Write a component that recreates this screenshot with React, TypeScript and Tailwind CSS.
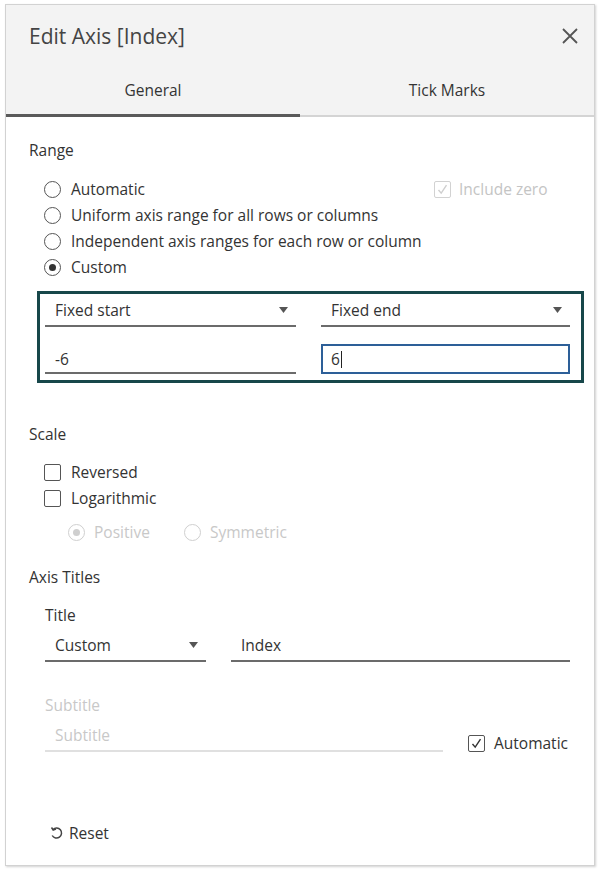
import React from 'react'

const Caret = () => (
  <svg width="9" height="6" viewBox="0 0 9 6" className="shrink-0">
    <path d="M0 0 L9 0 L4.5 6 Z" fill="#555" />
  </svg>
)

const Radio = ({ checked, disabled }: { checked?: boolean; disabled?: boolean }) => (
  <span
    className={`flex h-[17px] w-[17px] shrink-0 items-center justify-center rounded-full border-[1.5px] ${
      disabled ? 'border-[#cfcfcf]' : 'border-[#555]'
    }`}
  >
    {checked && (
      <span className={`h-[7px] w-[7px] rounded-full ${disabled ? 'bg-[#cfcfcf]' : 'bg-[#333]'}`} />
    )}
  </span>
)

const Checkbox = ({ checked, disabled }: { checked?: boolean; disabled?: boolean }) => (
  <span
    className={`flex h-[17px] w-[17px] shrink-0 items-center justify-center rounded-[2px] border-[1.5px] ${
      disabled ? 'border-[#d2d2d2]' : 'border-[#555]'
    }`}
  >
    {checked && (
      <svg width="11" height="11" viewBox="0 0 11 11">
        <path
          d="M1.5 6 L4.2 9.2 L9.5 1.2"
          fill="none"
          stroke={disabled ? '#cfcfcf' : '#333'}
          strokeWidth="1.4"
        />
      </svg>
    )}
  </span>
)

const Select = ({ label, width }: { label: string; width: string }) => (
  <div className={`flex h-[33px] ${width} items-center justify-between border-b-2 border-[#6b6b6b] pl-[10px] pr-[8px] pt-[1px]`}>
    <span>{label}</span>
    <Caret />
  </div>
)

export default function App() {
  return (
    <div
      className="h-[871px] w-[600px] overflow-hidden bg-white pl-[5px] pt-[4px] text-[15.5px] leading-[20px] text-[#333]"
      style={{ fontFamily: '"Open Sans", Arial, sans-serif' }}
    >
      <div className="flex h-[862px] w-[590px] flex-col border border-[#d2d2d2] bg-white shadow-[1px_1px_2px_rgba(0,0,0,0.18)]">
        {/* Header */}
        <div className="bg-[#f3f3f3]">
          <div className="flex h-[62px] items-center justify-between pl-[23px] pr-[15px]">
            <span className="text-[21px] leading-[26px] text-[#444]">Edit Axis [Index]</span>
            <svg width="18" height="18" viewBox="0 0 18 18">
              <path d="M2 2 L16 16 M16 2 L2 16" stroke="#555" strokeWidth="1.8" />
            </svg>
          </div>
          <div className="flex h-[47px] pb-[1px]">
            <div className="flex w-[294px] items-center justify-center">General</div>
            <div className="flex flex-1 items-center justify-center">Tick Marks</div>
          </div>
          <div className="flex h-[3px]">
            <div className="w-[294px] bg-[#5a5a5a]" />
            <div className="mt-[1px] flex-1 bg-[#d4d4d4]" />
          </div>
        </div>

        {/* Body */}
        <div className="flex flex-1 flex-col pl-[23px]">
          {/* Range */}
          <div className="mt-[23px]">Range</div>
          <div className="mt-[16px] flex flex-col pl-[15px]">
            <div className="flex h-[26px] items-center">
              <div className="flex w-[390px] items-center gap-[10px]">
                <Radio />
                <span>Automatic</span>
              </div>
              <div className="flex items-center gap-[8px] text-[#c4c4c4]">
                <Checkbox checked disabled />
                <span>Include zero</span>
              </div>
            </div>
            <div className="flex h-[26px] items-center gap-[10px]">
              <Radio />
              <span>Uniform axis range for all rows or columns</span>
            </div>
            <div className="flex h-[26px] items-center gap-[10px]">
              <Radio />
              <span>Independent axis ranges for each row or column</span>
            </div>
            <div className="flex h-[26px] items-center gap-[10px]">
              <Radio checked />
              <span>Custom</span>
            </div>
          </div>

          <div className="ml-[8px] mt-[11px] w-[547px] border-[3px] border-[#17474a] pb-[6px] pl-[5px]">
            <div className="flex gap-[25px]">
              <Select label="Fixed start" width="w-[251px]" />
              <Select label="Fixed end" width="w-[249px]" />
            </div>
            <div className="mt-[17px] flex gap-[25px]">
              <div className="flex h-[30px] w-[251px] items-center border-b-2 border-[#6b6b6b] pl-[10px] pt-[1px]">-6</div>
              <div className="flex h-[30px] w-[249px] items-center border-2 border-[#2d5f98] pl-[8px]">
                6<span className="ml-[1px] h-[17px] w-[1px] bg-[#222]" />
              </div>
            </div>
          </div>

          {/* Scale */}
          <div className="mt-[41px]">Scale</div>
          <div className="mt-[15px] flex flex-col pl-[15px]">
            <div className="flex h-[26px] items-center gap-[10px]">
              <Checkbox />
              <span>Reversed</span>
            </div>
            <div className="flex h-[26px] items-center gap-[10px]">
              <Checkbox />
              <span>Logarithmic</span>
            </div>
            <div className="mt-[8px] flex h-[26px] items-center pl-[24px] text-[#c8c8c8]">
              <div className="flex w-[116px] items-center gap-[9px]">
                <Radio checked disabled />
                <span>Positive</span>
              </div>
              <div className="flex items-center gap-[9px]">
                <Radio disabled />
                <span>Symmetric</span>
              </div>
            </div>
          </div>

          {/* Axis Titles */}
          <div className="mt-[22px]">Axis Titles</div>
          <div className="flex flex-col pl-[16px]">
            <div className="mt-[18px]">Title</div>
            <div className="mt-[4px] flex gap-[25px]">
              <Select label="Custom" width="w-[161px]" />
              <div className="flex h-[33px] w-[339px] items-center border-b-2 border-[#6b6b6b] pl-[10px] pt-[1px]">Index</div>
            </div>

            <div className="mt-[33px] text-[#c8c8c8]">Subtitle</div>
            <div className="mt-[4px] flex items-end">
              <div className="flex h-[33px] w-[398px] items-center border-b-2 border-[#e0e0e0] pl-[10px] pt-[1px] text-[#c8c8c8]">
                Subtitle
              </div>
              <div className="mb-[-1px] ml-[25px] flex h-[20px] items-center gap-[9px]">
                <Checkbox checked />
                <span>Automatic</span>
              </div>
            </div>
          </div>

          {/* Reset */}
          <div className="mt-auto mb-[22px] flex h-[20px] items-center gap-[6px] pl-[21px]">
            <svg width="13" height="14" viewBox="0 0 13 14">
              <path d="M3 3.5 A5 5 0 1 1 2.2 9.5" fill="none" stroke="#444" strokeWidth="1.5" />
              <path d="M1.5 1.5 L3.2 4 L6 3" fill="none" stroke="#444" strokeWidth="1.5" />
            </svg>
            <span>Reset</span>
          </div>
        </div>
      </div>
    </div>
  )
}
